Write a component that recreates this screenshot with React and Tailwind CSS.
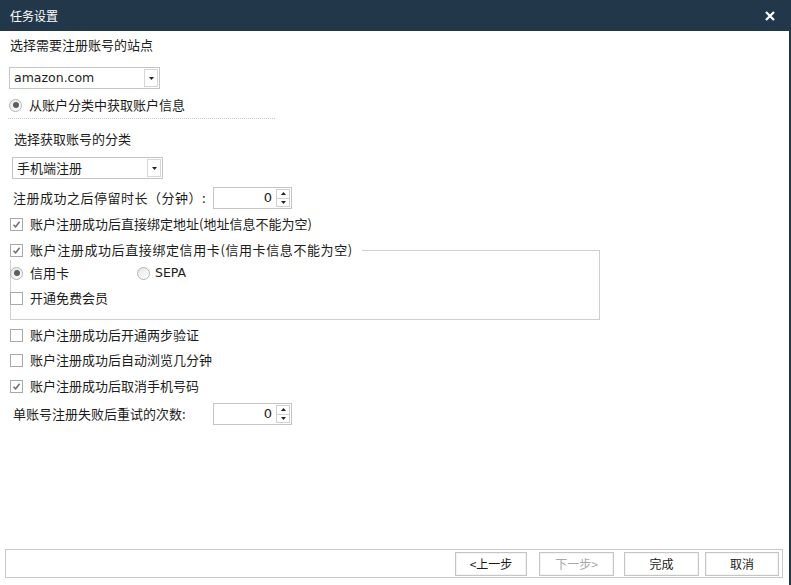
import React from "react";

const font = { fontFamily: '"Noto Sans CJK SC", "Noto Sans", sans-serif' };

const CheckBox = ({ checked }) => (
  <span className="w-[13px] h-[13px] border border-[#a9a9a9] bg-white flex items-center justify-center shrink-0">
    {checked && (
      <svg width="9" height="9" viewBox="0 0 9 9">
        <path d="M1.5 4.8 L3.6 6.8 L7.6 1.8" stroke="#6f6f6f" strokeWidth="1.5" fill="none" />
      </svg>
    )}
  </span>
);

const Radio = ({ checked }) => (
  <span className="w-[13px] h-[13px] rounded-full border border-[#b4b4b4] bg-gradient-to-br from-[#e6e6e6] to-white flex items-center justify-center shrink-0">
    {checked && <span className="w-[6px] h-[6px] rounded-full bg-[#5e5e5e]" />}
  </span>
);

const CheckRow = ({ checked, label, className = "", labelClass = "" }) => (
  <div className={"h-[20px] flex items-center gap-[7px] " + className}>
    <CheckBox checked={checked} />
    <span className={labelClass}>{label}</span>
  </div>
);

const Select = ({ value, className = "", latin }) => (
  <div className={"h-[22px] w-[151px] border border-[#c4c4c4] bg-white flex items-center justify-between pl-[4px] pr-[1px] " + className}>
    <span
      className={latin ? "text-[12.5px]" : ""}
      style={latin ? { fontFamily: '"DejaVu Sans", sans-serif' } : undefined}
    >
      {value}
    </span>
    <span className="w-[14px] h-[18px] border border-[#d6d6d6] flex items-center justify-center">
      <svg width="5" height="3" viewBox="0 0 5 3">
        <path d="M0 0 H5 L2.5 3 Z" fill="#222" />
      </svg>
    </span>
  </div>
);

const Spin = () => (
  <div className="h-[22px] w-[79px] border border-[#c4c4c4] bg-white flex items-center justify-end pr-[1px]">
    <span className="mr-[4px] text-[13px]" style={{ fontFamily: '"DejaVu Sans", sans-serif' }}>
      0
    </span>
    <span className="w-[14px] h-[18px] border border-[#d0d0d0] flex flex-col">
      <span className="flex-1 flex items-center justify-center border-b border-[#d0d0d0]">
        <svg width="5" height="3" viewBox="0 0 5 3">
          <path d="M0 3 H5 L2.5 0 Z" fill="#222" />
        </svg>
      </span>
      <span className="flex-1 flex items-center justify-center">
        <svg width="5" height="3" viewBox="0 0 5 3">
          <path d="M0 0 H5 L2.5 3 Z" fill="#222" />
        </svg>
      </span>
    </span>
  </div>
);

const Btn = ({ label, disabled, className = "" }) => (
  <button
    className={
      "h-[24px] border border-[#c6c6c6] bg-white shadow-[inset_0_0_0_1px_#f4f4f4] text-[12px] " +
      (disabled ? "text-[#a8a8a8] " : "text-[#1a1a1a] ") +
      className
    }
  >
    {label}
  </button>
);

export default function App() {
  return (
    <div
      className="w-[791px] h-[585px] bg-white flex flex-col text-[13px] text-[#1c1c1c] border-r-2 border-[#22384a]"
      style={font}
    >
      <div className="h-[31px] bg-[#22384a] flex items-center justify-between pl-[10px] pr-[14px] shrink-0">
        <span className="text-white text-[12px]">任务设置</span>
        <svg width="10" height="10" viewBox="0 0 10 10">
          <path d="M1 1 L9 9 M9 1 L1 9" stroke="white" strokeWidth="2.2" />
        </svg>
      </div>

      <div className="flex flex-col pl-[10px]">
        <div className="h-[28px] flex items-center">选择需要注册账号的站点</div>
        <Select value="amazon.com" latin className="mt-[8px] -ml-[1px]" />
        <div className="h-[20px] mt-[6px] flex items-center gap-[7px] -ml-[1px]">
          <Radio checked />
          <span>从账户分类中获取账户信息</span>
        </div>
        <div className="mt-[3px] w-[267px] border-t border-dotted border-[#c8c8c8] -ml-[2px]" />

        <div className="h-[20px] mt-[10px] flex items-center pl-[4px]">选择获取账号的分类</div>
        <Select value="手机端注册" className="mt-[8px] ml-[2px]" />

        <div className="h-[22px] mt-[8px] flex items-center pl-[3px]">
          <span className="w-[200px] tracking-[0.5px]">注册成功之后停留时长（分钟）:</span>
          <Spin />
        </div>

        <CheckRow checked label="账户注册成功后直接绑定地址(地址信息不能为空)" className="mt-[5px]" />

        <div className="mt-[16px] w-[590px] border border-[#cfcfcf] pb-[11px]">
          <div className="-mt-[11px] -ml-px w-[352px] bg-white">
            <CheckRow
              checked
              label="账户注册成功后直接绑定信用卡(信用卡信息不能为空)"
              labelClass="tracking-[0.6px]"
            />
          </div>
          <div className="h-[20px] mt-[3px] flex items-center -ml-px">
            <div className="w-[127px] flex items-center gap-[7px]">
              <Radio checked />
              <span>信用卡</span>
            </div>
            <div className="flex items-center gap-[5px]">
              <Radio />
              <span className="text-[12.5px]" style={{ fontFamily: '"DejaVu Sans", sans-serif' }}>
                SEPA
              </span>
            </div>
          </div>
          <div className="-ml-px">
            <CheckRow label="开通免费会员" className="mt-[5px]" />
          </div>
        </div>

        <CheckRow label="账户注册成功后开通两步验证" className="mt-[5px]" />
        <CheckRow label="账户注册成功后自动浏览几分钟" className="mt-[5px]" />
        <CheckRow checked label="账户注册成功后取消手机号码" className="mt-[6px]" />

        <div className="h-[22px] mt-[7px] flex items-center pl-[3px]">
          <span className="w-[200px]">单账号注册失败后重试的次数:</span>
          <Spin />
        </div>
      </div>

      <div className="flex-1" />

      <div className="h-[29px] mb-[7px] ml-[5px] mr-[6px] border border-[#cacaca] flex items-center justify-end pr-[3px]">
        <Btn label="<上一步" className="w-[72px]" />
        <Btn label="下一步>" disabled className="w-[75px] ml-[12px]" />
        <Btn label="完成" className="w-[75px] ml-[10px]" />
        <Btn label="取消" className="w-[74px] ml-[6px]" />
      </div>
    </div>
  );
}
